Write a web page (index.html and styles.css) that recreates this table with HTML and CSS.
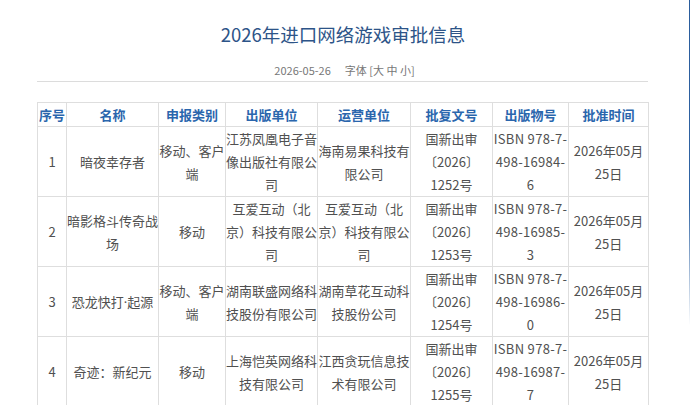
FILE: index.html
```html
<!DOCTYPE html>
<html lang="zh-CN">
<head>
<meta charset="utf-8">
<title>2026年进口网络游戏审批信息</title>
<link rel="stylesheet" href="styles.css">
</head>
<body>
<div class="page">
  <main class="content">
    <h1 class="title">2026年进口网络游戏审批信息</h1>
    <div class="meta"><span class="date">2026-05-26</span><span class="fontsize">字体 [大 中 小]</span></div>
    <div class="rule"></div>
    <table class="list">
      <colgroup>
        <col class="c1"><col class="c2"><col class="c3"><col class="c4"><col class="c5"><col class="c6"><col class="c7"><col class="c8">
      </colgroup>
      <thead>
        <tr><th>序号</th><th>名称</th><th>申报类别</th><th>出版单位</th><th>运营单位</th><th>批复文号</th><th>出版物号</th><th>批准时间</th></tr>
      </thead>
      <tbody>
        <tr><td>1</td><td>暗夜幸存者</td><td>移动、客户端</td><td>江苏凤凰电子音像出版社有限公司</td><td>海南易果科技有限公司</td><td>国新出审〔2026〕1252号</td><td class="isbn">ISBN 978-7-<wbr>498-16984-<wbr>6</td><td>2026年05月25日</td></tr>
        <tr><td>2</td><td>暗影格斗传奇战场</td><td>移动</td><td>互爱互动（北京）科技有限公司</td><td>互爱互动（北京）科技有限公司</td><td>国新出审〔2026〕1253号</td><td class="isbn">ISBN 978-7-<wbr>498-16985-<wbr>3</td><td>2026年05月25日</td></tr>
        <tr><td>3</td><td>恐龙快打<span class="dot">·</span>起源</td><td>移动、客户端</td><td>湖南联盛网络科技股份有限公司</td><td>湖南草花互动科技股份公司</td><td>国新出审〔2026〕1254号</td><td class="isbn">ISBN 978-7-<wbr>498-16986-<wbr>0</td><td>2026年05月25日</td></tr>
        <tr><td>4</td><td>奇迹：新纪元</td><td>移动</td><td>上海恺英网络科技有限公司</td><td>江西贪玩信息技术有限公司</td><td>国新出审〔2026〕1255号</td><td class="isbn">ISBN 978-7-<wbr>498-16987-<wbr>7</td><td>2026年05月25日</td></tr>
      </tbody>
    </table>
  </main>
  <div class="edge"></div>
</div>
</body>
</html>
```
FILE: styles.css
```css
html, body {
  margin: 0;
  padding: 0;
  background: #ffffff;
}
body {
  font-family: "Noto Sans CJK SC", "Noto Sans", sans-serif;
  color: #444;
}
.page {
  display: flex;
  min-height: 405px;
}
.content {
  flex: 1;
  padding: 0 40px 0 37px;
}
.title {
  margin: 0;
  padding-top: 20px;
  height: 28px;
  line-height: 28px;
  font-size: 18.5px;
  font-weight: normal;
  color: #2d5488;
  text-align: center;
}
.meta {
  margin-top: 12px;
  height: 20px;
  line-height: 20px;
  font-size: 11px;
  color: #777;
  text-align: center;
  padding-left: 3px;
}
.date {
  margin-right: 14px;
}
.rule {
  margin-top: 1px;
  height: 1px;
  width: 611px;
  background: #dcdcdc;
}
.list {
  margin-top: 20px;
  width: 611px;
  table-layout: fixed;
  border-collapse: collapse;
  font-size: 13px;
}
.c1 { width: 29px; }
.c2 { width: 92px; }
.c3 { width: 67px; }
.c4 { width: 92px; }
.c5 { width: 93px; }
.c6 { width: 82px; }
.c7 { width: 76px; }
.c8 { width: 80px; }
.list th, .list td {
  border: 1px solid #dedede;
  padding: 0;
  text-align: center;
  vertical-align: middle;
  line-height: 23px;
}
.list th {
  color: #2a66ad;
  font-weight: bold;
  height: 23px;
}
.list td {
  color: #505050;
  height: 68px;
}
.list .isbn {
  letter-spacing: 0.3px;
}
.dot {
  font-family: "Noto Sans", sans-serif;
}
.edge {
  width: 2px;
  flex: none;
  background: linear-gradient(to bottom, #2a5c9c 0%, #2f64a4 50%, #ffffff 80%);
}
```
